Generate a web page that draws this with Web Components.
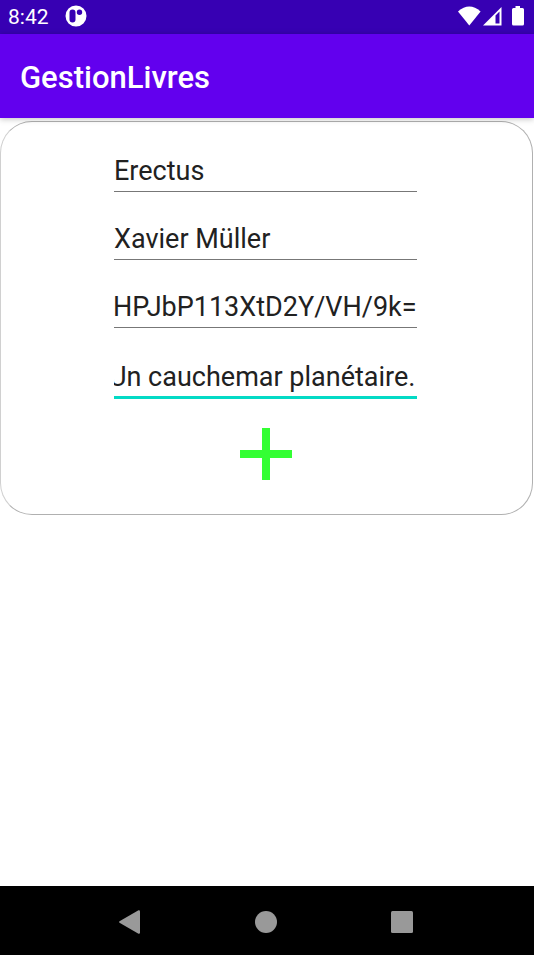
<!DOCTYPE html>
<html lang="fr">
<head>
<meta charset="utf-8">
<meta name="viewport" content="width=device-width">
<title>GestionLivres</title>
<style>
html, body { height: 100%; }
body { margin: 0; background: #fff; font-family: Roboto, "Noto Sans", sans-serif; }
</style>
</head>
<body>
<phone-screen>
  <status-bar slot="top">8:42</status-bar>
  <app-bar slot="top">GestionLivres</app-bar>
  <book-form>
    <text-field label="Titre" value="Erectus"></text-field>
    <text-field label="Auteur" value="Xavier Müller"></text-field>
    <text-field label="Image" value="HPJbP113XtD2Y/VH/9k="></text-field>
    <text-field label="Résumé" value="Un cauchemar planétaire." active></text-field>
    <add-button></add-button>
  </book-form>
  <nav-bar slot="bottom"></nav-bar>
</phone-screen>
<script>
const define = (name, html, setup) => {
  const template = document.createElement('template');
  template.innerHTML = html;
  customElements.define(name, class extends HTMLElement {
    constructor() {
      super();
      this.attachShadow({ mode: 'open' }).append(template.content.cloneNode(true));
    }
    connectedCallback() { if (setup) setup(this, this.shadowRoot); }
  });
};

define('phone-screen', `<style>
:host { display: flex; flex-direction: column; min-height: 100%; }
main { flex: 1; padding: 3px 1px 0 0; }
header { position: relative; }
</style><header><slot name="top"></slot></header><main><slot></slot></main><slot name="bottom"></slot>`);

define('status-bar', `<style>
:host { display: flex; align-items: center; height: 34px; padding: 0 8px; box-sizing: border-box; background: #3700b3; color: #fff; font-size: 21px; line-height: 24px; }
svg { display: block; fill: #fff; }
.app { margin-left: 16px; margin-right: auto; }
</style><span><slot></slot></span>
<svg class="app" width="22" height="24" viewBox="0 0 22 24" aria-hidden="true"><path fill-rule="evenodd" d="M11 .5a10.500 10.500 0 1 1 0 21a10.500 10.500 0 0 1 0-21ZM7.500 4.500Q4.500 4.500 4.500 7.500V14.500Q4.500 17.500 7.500 17.500Q10.500 17.500 10.500 14.500V7.500Q10.500 4.500 7.500 4.500ZM14.500 4.500a2.700 2.700 0 1 0 0 5.400a2.700 2.700 0 0 0 0-5.400Z"/></svg>
<svg width="68" height="24" viewBox="0 0 68 24" aria-hidden="true"><path d="M0 6.500Q11.300-3.500 22.600 6.500L11.300 20.500Z"/><path fill-rule="evenodd" d="M43.500 2V20.500H25ZM37.500 10.500V18.500H41.500V6.500Z"/><path d="M57.500 1H62V3H64.500Q66 3 66 4.500V19Q66 20.500 64.500 20.500H55.500Q54 20.500 54 19V4.500Q54 3 55.500 3H57.500Z"/></svg>`);

define('app-bar', `<style>
:host { display: flex; align-items: center; height: 84px; padding: 4px 20px 0; box-sizing: border-box; background: #6200ee; color: #fff; box-shadow: 0 1px 6px rgba(0,0,0,.25); }
h1 { margin: 0; font-size: 31px; line-height: 36px; font-weight: 500; }
</style><h1><slot></slot></h1>`);

define('book-form', `<style>
:host { display: block; }
form { display: flex; flex-direction: column; align-items: center; padding: 29px 2px 29px 0; border: 1px solid #b0b0b0; border-left-color: #d0d0d0; border-radius: 32px; }
</style><form><slot></slot></form>`);

define('text-field', `<style>
:host { display: block; width: 303px; max-width: 100%; height: 68px; }
label { display: block; }
input { display: block; box-sizing: border-box; width: 100%; height: 41px; margin: 0; padding: 0 0 1px; border: 0; border-bottom: 1px solid #777; border-radius: 0; outline: 0; background: transparent; color: #212121; font: 400 27px/36px Roboto, "Noto Sans", sans-serif; }
:host([active]) input { height: 44px; padding: 2px 2px 0 0; border-bottom: 3px solid #03dac5; }
</style><label><input type="text"></label>`, (host, root) => {
  const input = root.querySelector('input');
  input.setAttribute('aria-label', host.getAttribute('label'));
  input.value = host.getAttribute('value');
  input.scrollLeft = input.scrollWidth;
});

define('add-button', `<style>
:host { display: block; }
button { display: block; padding: 5px; margin: 0; border: 0; background: none; }
svg { display: block; }
</style><button type="button" aria-label="Ajouter"><svg width="52" height="52" viewBox="0 0 52 52"><path fill="#3f3" d="M22 0H30V22H52V30H30V52H22V30H0V22H22Z"/></svg></button>`);

define('nav-bar', `<style>
:host { display: block; background: #000; }
nav { display: flex; justify-content: center; height: 69px; padding: 3px 2px 0 0; box-sizing: border-box; }
button { width: 136px; padding: 0; border: 0; background: none; display: grid; place-items: center; }
svg { display: block; fill: #999; }
</style><nav>
<button type="button" aria-label="Retour"><svg width="24" height="24" viewBox="0 0 24 24"><path d="M1.500 11.300L20.500.3Q22 0 22 1.500V22.500Q22 24 20.500 23.700L1.500 12.700Q.5 12 1.500 11.300Z"/></svg></button>
<button type="button" aria-label="Accueil"><svg width="22" height="22" viewBox="0 0 22 22"><circle cx="11" cy="11" r="11"/></svg></button>
<button type="button" aria-label="Applications récentes"><svg width="22" height="22" viewBox="0 0 22 22"><rect width="22" height="22" rx="1.500"/></svg></button>
</nav>`);
</script>
</body>
</html>
